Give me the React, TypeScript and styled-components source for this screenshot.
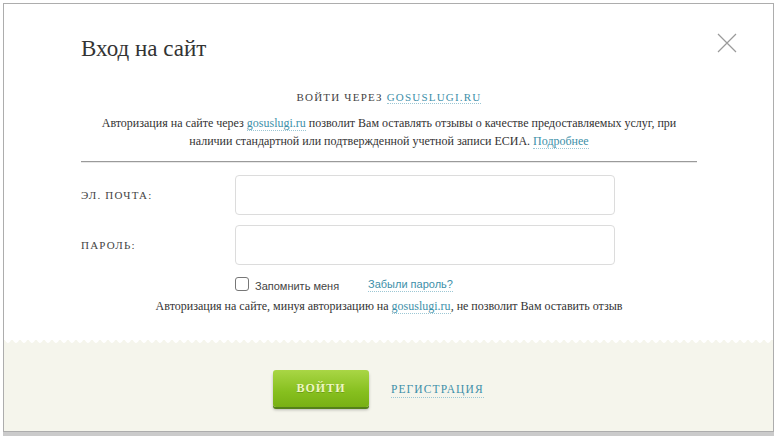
import React from "react";
import styled, { createGlobalStyle } from "styled-components";

const Global = createGlobalStyle`
  html, body { margin: 0; padding: 0; background: #ffffff; }
  body { font-family: "Liberation Serif", serif; color: #333; }
  * { box-sizing: border-box; }
`;

const Page = styled.div`
  width: 776px;
  height: 436px;
  padding: 3px 2px 0 3px;
  background: #ffffff;
  overflow: hidden;
`;

const Modal = styled.div`
  position: relative;
  width: 771px;
  height: 429px;
  border: 1px solid #adadad;
  background: #ffffff;
  box-shadow: 0 5px 0 #cbcbcb;
  display: flex;
  flex-direction: column;
`;

const Body = styled.div`
  padding: 32px 76px 0 77px;
  display: flex;
  flex-direction: column;
`;

const Title = styled.h1`
  margin: 0;
  font-family: "Liberation Serif", serif;
  font-weight: normal;
  font-size: 23px;
  line-height: 26px;
  color: #333;
`;

const Close = styled.button`
  position: absolute;
  top: 29px;
  right: 36px;
  width: 20px;
  height: 20px;
  padding: 0;
  border: 0;
  background: none;
  cursor: pointer;
  display: flex;
`;

const GosHeading = styled.div`
  margin-top: 27px;
  text-align: center;
  font-size: 11px;
  line-height: 16px;
  letter-spacing: 1.2px;
  text-transform: uppercase;
  color: #444;
`;

const Link = styled.a`
  color: #3d8fa9;
  text-decoration: none;
  border-bottom: 1px dotted #9cc7d4;
`;

const Para = styled.p`
  margin: 9px 0 0;
  text-align: center;
  font-size: 12px;
  line-height: 18px;
  color: #333;
`;

const Rule = styled.hr`
  margin: 11px 0 0;
  border: 0;
  border-top: 1px solid #9a9a9a;
  box-shadow: 0 1px 0 #e8e8e8;
  height: 0;
`;

const Form = styled.div`
  margin-top: 13px;
  display: flex;
  flex-direction: column;
  gap: 10px;
`;

const Row = styled.label`
  display: grid;
  grid-template-columns: 154px 380px;
  align-items: center;
`;

const Label = styled.span`
  font-size: 11px;
  letter-spacing: 1.2px;
  text-transform: uppercase;
  color: #444;
`;

const Input = styled.input`
  width: 380px;
  height: 40px;
  border: 1px solid #dcdcdc;
  border-radius: 4px;
  background: #fff;
  outline: none;
`;

const Options = styled.div`
  margin-top: 11px;
  padding-left: 154px;
  display: flex;
  align-items: center;
  height: 16px;
`;

const Check = styled.span`
  width: 14px;
  height: 14px;
  border: 1px solid #777;
  border-radius: 3px;
  background: #fff;
  flex: none;
`;

const CheckText = styled.span`
  margin-left: 6px;
  width: 113px;
  font-family: "Liberation Sans", sans-serif;
  font-size: 11px;
  line-height: 16px;
  padding-top: 3px;
  color: #444;
`;

const Forgot = styled.a`
  font-family: "Liberation Sans", sans-serif;
  font-size: 11px;
  line-height: 14px;
  color: #3d8fa9;
  text-decoration: none;
  border-bottom: 1px dotted #9cc7d4;
`;

const Note = styled.p`
  margin: 6px 0 0;
  text-align: center;
  font-size: 12px;
  line-height: 16px;
  color: #333;
`;

const Footer = styled.div`
  position: relative;
  margin-top: auto;
  height: 91px;
  background: #f5f5ec;
  padding: 30px 0 0 269px;
  display: flex;
  align-items: flex-start;
  gap: 22px;
  &::before {
    content: "";
    position: absolute;
    left: 0;
    right: 0;
    top: 0;
    height: 4px;
    background: radial-gradient(circle at 4px 0, #ffffff 2.5px, transparent 3px) repeat-x;
    background-size: 8px 4px;
  }
`;

const Submit = styled.button`
  width: 96px;
  height: 37px;
  border: 0;
  border-radius: 3px;
  background: linear-gradient(#a9d645, #86bf1e 60%, #78b014);
  box-shadow: 0 2px 0 #54801a, 0 3px 3px rgba(0, 0, 0, 0.25);
  font-family: "Liberation Serif", serif;
  font-weight: bold;
  font-size: 12px;
  letter-spacing: 1px;
  color: #eef6c2;
  text-shadow: 0 1px 0 rgba(70, 110, 10, 0.4);
  cursor: pointer;
`;

const Register = styled.a`
  margin-top: 12px;
  font-size: 11.5px;
  line-height: 15px;
  letter-spacing: 1.1px;
  color: #3d8fa9;
  text-decoration: none;
  border-bottom: 1px dotted #9cc7d4;
`;

export default function App() {
  return (
    <>
      <Global />
      <Page>
        <Modal>
          <Close aria-label="Закрыть">
            <svg width="20" height="20" viewBox="0 0 20 20">
              <path d="M1 1 L19 19 M19 1 L1 19" stroke="#9a9a9a" strokeWidth="1.2" fill="none" />
            </svg>
          </Close>
          <Body>
            <Title>Вход на сайт</Title>
            <GosHeading>
              Войти через <Link href="#">gosuslugi.ru</Link>
            </GosHeading>
            <Para>
              Авторизация на сайте через <Link href="#">gosuslugi.ru</Link> позволит Вам оставлять отзывы о качестве
              предоставляемых услуг, при
              <br />
              наличии стандартной или подтвержденной учетной записи ЕСИА. <Link href="#">Подробнее</Link>
            </Para>
            <Rule />
            <Form>
              <Row>
                <Label>Эл. почта:</Label>
                <Input type="text" />
              </Row>
              <Row>
                <Label>Пароль:</Label>
                <Input type="password" />
              </Row>
            </Form>
            <Options>
              <Check />
              <CheckText>Запомнить меня</CheckText>
              <Forgot href="#">Забыли пароль?</Forgot>
            </Options>
            <Note>
              Авторизация на сайте, минуя авторизацию на <Link href="#">gosuslugi.ru</Link>, не позволит Вам оставить
              отзыв
            </Note>
          </Body>
          <Footer>
            <Submit>ВОЙТИ</Submit>
            <Register href="#">РЕГИСТРАЦИЯ</Register>
          </Footer>
        </Modal>
      </Page>
    </>
  );
}
